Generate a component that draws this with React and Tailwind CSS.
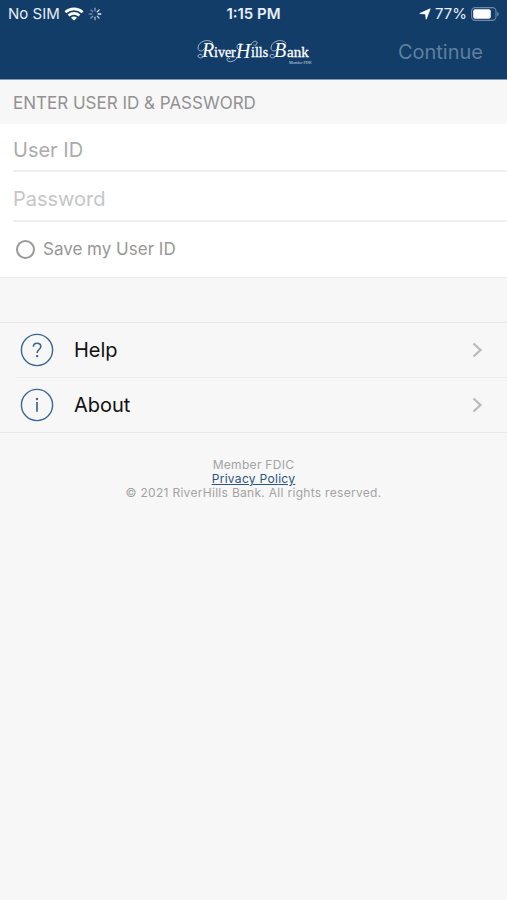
import React, { useState } from "react";

const WifiIcon = () => (
  <svg width="20" height="14" viewBox="0 0 20 14" fill="none" stroke="#fff" strokeWidth="2.6" aria-hidden="true">
    <path d="M1.4 5.2C6.2 .7 13.8 .7 18.6 5.2" />
    <path d="M4.6 8.5C7.6 5.7 12.4 5.7 15.4 8.5" />
    <path d="M10 13.6 7 10.7C8.7 9.2 11.3 9.2 13 10.7Z" fill="#fff" stroke="none" />
  </svg>
);

const SpinnerIcon = () => (
  <svg width="14" height="14" viewBox="0 0 14 14" stroke="#fff" strokeWidth="1.3" strokeLinecap="round" aria-hidden="true">
    <path d="M7 1.2v2.6" opacity=".5" />
    <path d="M11.1 2.9 9.3 4.7" opacity=".85" />
    <path d="M12.8 7h-2.6" opacity=".9" />
    <path d="M11.1 11.1 9.3 9.3" opacity=".7" />
    <path d="M7 12.8v-2.6" opacity=".6" />
    <path d="M2.9 11.1 4.7 9.3" opacity=".5" />
    <path d="M1.2 7h2.6" opacity=".4" />
    <path d="M2.9 2.9 4.7 4.7" opacity=".4" />
  </svg>
);

const LocationIcon = () => (
  <svg width="12" height="12" viewBox="0 0 12 12" fill="#fff" stroke="#fff" strokeWidth=".8" strokeLinejoin="round" aria-hidden="true">
    <path d="M11.2.8 7.2 11.2 6.6 5.9.8 5.5Z" />
  </svg>
);

const BatteryIcon = () => (
  <svg width="28" height="14" viewBox="0 0 28 14" fill="none" aria-hidden="true">
    <rect x=".6" y=".6" width="24.4" height="12.8" rx="3.6" stroke="#7189a6" strokeWidth="1.1" />
    <rect x="2.2" y="2.2" width="17.6" height="9.6" rx="2" fill="#fff" />
    <path d="M26.2 4.7c2 .7 2 3.9 0 4.6Z" fill="#7189a6" />
  </svg>
);

const Logo = () => (
  <svg width="116" height="28" viewBox="0 0 116 28" role="img" aria-label="RiverHills Bank">
    <g fill="#fff" fontFamily="Liberation Serif, serif">
      <text x="6" y="19" fontSize="20" fontStyle="italic">R</text>
      <text x="18" y="19" fontSize="14" stroke="#fff" strokeWidth=".3">iver</text>
      <text x="40" y="20" fontSize="20" fontStyle="italic">H</text>
      <text x="55" y="19" fontSize="14" stroke="#fff" strokeWidth=".3">ills</text>
      <text x="78" y="19" fontSize="20" fontStyle="italic">B</text>
      <text x="91" y="19" fontSize="15" stroke="#fff" strokeWidth=".3">ank</text>
      <text x="93" y="26" fontSize="4" opacity=".8">Member FDIC</text>
    </g>
    {/* swashes on the capitals */}
    <g fill="none" stroke="#dbe4ee" strokeWidth=".7" strokeLinecap="round">
      <path d="M17 5C13 0 2 3 2 10c0 4 5 4 7 0" />
      <path d="M8 18c-2 3-6 2-6 0s3-2 4-1" />
      <path d="M42 19c-3 5-10 6-11 3-.6-2 2-3 3-1" />
      <path d="M46 6c-5-2-7 4-3 6M55 7c1-4 6-5 6-2 0 2-2 3-3 2" />
      <path d="M90 5C86 0 75 3 75 10c0 4 5 4 7 0" />
      <path d="M80 18c-2 3-6 2-6 0s3-2 4-1" />
    </g>
  </svg>
);

const HelpIcon = () => (
  <svg width="34" height="34" viewBox="0 0 34 34" fill="none" stroke="#3b6592" aria-hidden="true">
    <circle cx="17" cy="17" r="15.6" strokeWidth="1.4" />
    <path d="M13.4 13.7c0-2.1 1.5-3.5 3.7-3.5s3.7 1.3 3.7 3.3c0 3-3.7 3.1-3.7 6.5" strokeWidth="1.6" />
    <circle cx="17.1" cy="23.1" r="1.2" fill="#3b6592" stroke="none" />
  </svg>
);

const AboutIcon = () => (
  <svg width="34" height="34" viewBox="0 0 34 34" fill="none" stroke="#3b6592" aria-hidden="true">
    <circle cx="17" cy="17" r="15.6" strokeWidth="1.4" />
    <path d="M17 14v9.8" strokeWidth="1.7" />
    <circle cx="17" cy="11" r="1.2" fill="#3b6592" stroke="none" />
  </svg>
);

const Chevron = () => (
  <svg width="11" height="16" viewBox="0 0 11 16" fill="none" stroke="#b9b9b9" strokeWidth="2.2" aria-hidden="true">
    <path d="m1.5 1.5 7 6.5-7 6.5" />
  </svg>
);

const links = [
  { label: "Help", Icon: HelpIcon },
  { label: "About", Icon: AboutIcon },
];

const App = () => {
  const [userId, setUserId] = useState("");
  const [password, setPassword] = useState("");
  const [saveId, setSaveId] = useState(false);

  return (
    <div className="min-h-screen bg-[#f7f7f7] font-['Inter',sans-serif]">
      <header className="bg-[#123d68] border-b border-[#8299b3] text-white">
        <div className="grid grid-cols-[1fr_auto_1fr] items-center h-7 px-2 text-[15px] text-[#e8eef4]">
          <div className="flex items-center gap-1">
            <span>No SIM</span>
            <WifiIcon />
            <SpinnerIcon />
          </div>
          <span className="font-semibold">1:15 PM</span>
          <div className="flex items-center justify-end gap-1">
            <LocationIcon />
            <span>77%</span>
            <BatteryIcon />
          </div>
        </div>
        <div className="grid grid-cols-[1fr_auto_1fr] items-center h-[51px] px-6 pb-1">
          <span />
          <Logo />
          <button type="button" disabled className="justify-self-end text-xl text-[#5f7f9f]">
            Continue
          </button>
        </div>
      </header>

      <main>
        <form onSubmit={(e) => e.preventDefault()}>
          <h1 className="h-11 pt-1 px-[13px] flex items-center text-[17px] text-[#929292]">
            ENTER USER ID &amp; PASSWORD
          </h1>
          <div className="bg-white border-b border-[#ebebeb]">
            <div className="ml-[13px] border-b-2 border-[#f0f0f0]">
              <input
                type="text"
                aria-label="User ID"
                placeholder="User ID"
                value={userId}
                onChange={(e) => setUserId(e.target.value)}
                className="block w-full h-[46px] pt-1.5 text-xl outline-none placeholder:text-[#acacac]"
              />
            </div>
            <div className="ml-[13px] border-b-2 border-[#f0f0f0]">
              <input
                type="password"
                aria-label="Password"
                placeholder="Password"
                value={password}
                onChange={(e) => setPassword(e.target.value)}
                className="block w-full h-12 pt-1.5 text-xl outline-none placeholder:text-[#c6c6c6]"
              />
            </div>
            <label className="flex items-center gap-2 h-[55px] px-4 text-[17px] text-[#979797]">
              <input
                type="checkbox"
                checked={saveId}
                onChange={(e) => setSaveId(e.target.checked)}
                className="appearance-none w-[19px] h-[19px] rounded-full border-2 border-[#9a9a9a] checked:bg-[#123d68]"
              />
              Save my User ID
            </label>
          </div>
        </form>

        <nav className="mt-11 border-y border-[#e8e8e8]">
          {links.map(({ label, Icon }, i) => (
            <React.Fragment key={label}>
              {i > 0 && <div className="ml-4 h-px bg-[#ededed]" />}
              <a href="#" className="flex items-center h-[54px] px-5 text-xl text-[#111]">
                <Icon />
                <span className="ml-5 flex-1">{label}</span>
                <span className="pr-1">
                  <Chevron />
                </span>
              </a>
            </React.Fragment>
          ))}
        </nav>
      </main>

      <footer className="pt-[25px] text-center text-xs/[14px] tracking-wide text-[#a3a3a3]">
        <p>Member FDIC</p>
        <p>
          <a href="#" className="underline text-[#2b5580]">Privacy Policy</a>
        </p>
        <p>© 2021 RiverHills Bank. All rights reserved.</p>
      </footer>
    </div>
  );
};

export default App;
